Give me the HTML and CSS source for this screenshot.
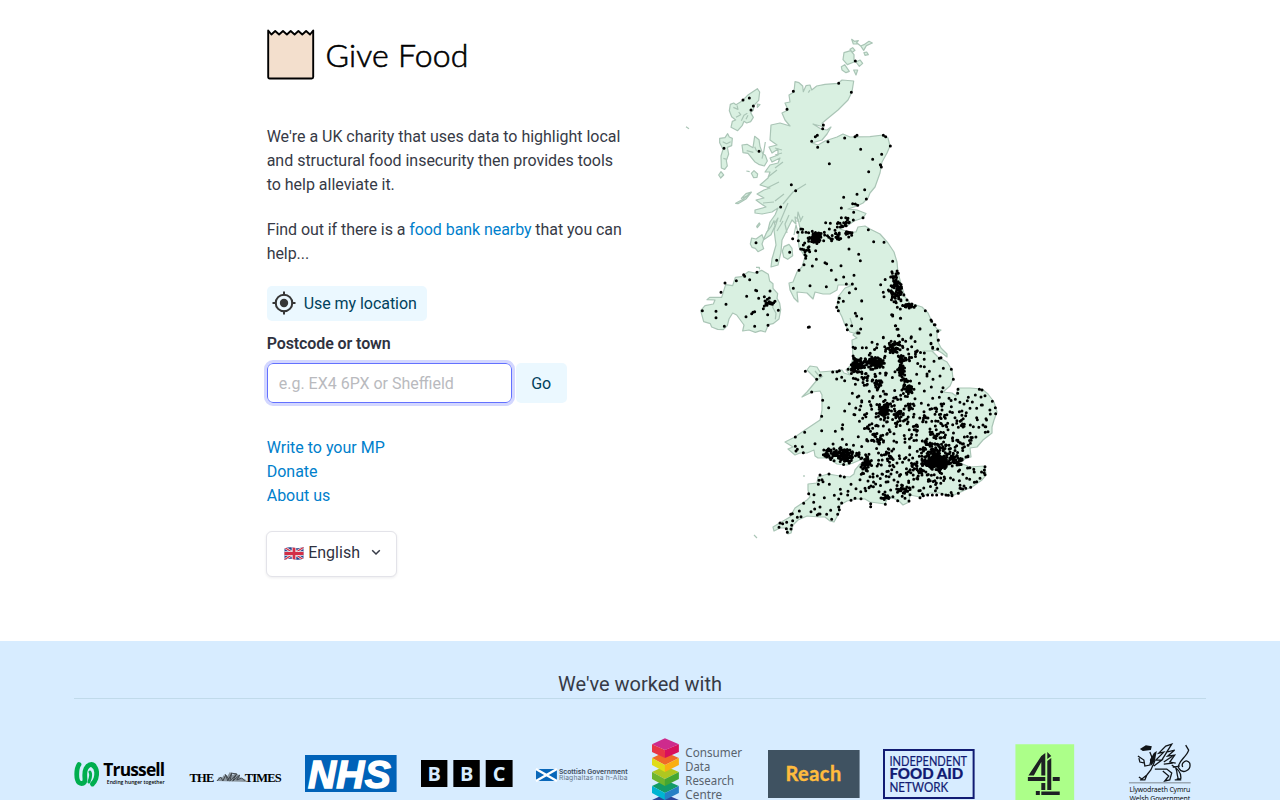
FILE: index.html
```html
<!DOCTYPE html>
<html lang="en">
<head>
<meta charset="utf-8">
<title>Give Food</title>
<link rel="stylesheet" href="styles.css">
</head>
<body>
<main class="hero">
  <section class="intro">
    <svg class="brand" viewBox="0 0 204 52" role="img" aria-label="Give Food">
      <path d="M1.200 48V1.500l3.200 4 3.800-3.500 3.900 3.500L16 2l3.900 3.500 3.800-3.500 3.900 3.500 3.800-3.500 3.900 3.500 3.800-3.500 3.900 3.500L46.200 1.500v46.500q0 1.500-1.500 1.500H2.700Q1.200 49.500 1.200 48Z" fill="#f3dfcd" stroke="#000" stroke-width="1.900" stroke-linejoin="round"/>
      <text class="brand-name" x="58.500" y="38" textLength="143">Give Food</text>
    </svg>
    <p class="lead">We're a UK charity that uses data to highlight local<br>and structural food insecurity then provides tools<br>to help alleviate it.</p>
    <p class="lead invite">Find out if there is a <a href="#">food bank nearby</a> that you can<br>help...</p>
    <button class="button locate">
      <svg class="target" viewBox="0 0 24 24"><g fill="none" stroke="#363636" stroke-width="2"><circle cx="12" cy="12" r="8.300"/><path d="M12 .5v4M12 19.500v4M.5 12h4M19.500 12h4"/></g><circle cx="12" cy="12" r="4.200" fill="#363636"/></svg>
      <span>Use my location</span>
    </button>
    <label class="label" for="place">Postcode or town</label>
    <div class="search">
      <input class="input" id="place" placeholder="e.g. EX4 6PX or Sheffield">
      <button class="button go">Go</button>
    </div>
    <ul class="links">
      <li><a href="#">Write to your MP</a></li>
      <li><a href="#">Donate</a></li>
      <li><a href="#">About us</a></li>
    </ul>
    <button class="language">
      <svg class="flag" viewBox="0 0 20 15"><defs><clipPath id="wave"><path d="M.5 2.500Q5 .5 10 1.700T19.500 1V12.500Q15 14.500 10 13.200T.5 14Z"/></clipPath></defs><g clip-path="url(#wave)"><path fill="#29428d" d="M0 0h20v15H0z"/><path stroke="#eee" stroke-width="2.600" d="m0 1 20 13M20 1 0 14"/><path stroke="#d32d45" stroke-width="1.200" d="m0 1 20 13M20 1 0 14"/><path stroke="#eee" stroke-width="4.600" d="M10 0v15M0 7.500h20"/><path stroke="#d32d45" stroke-width="2.800" d="M10 0v15M0 7.500h20"/></g></svg>
      <span>English</span>
      <svg class="chevron" viewBox="0 0 10 7"><path d="m1.200 1.200 3.800 3.800 3.800-3.800" fill="none" stroke="#363a46" stroke-width="1.500"/></svg>
    </button>
  </section>
  <svg class="map" viewBox="680 30 330 515" role="img" aria-label="Map of food banks in the UK">
    <g class="land">
      <path id="mainland" d="M795 81.700 799 82.700 802.700 86 803.300 91.700 806 85.700 810 85 811.700 90 816.700 86 825 84.300 838 83.300 842 80 853.700 81 852 91.700 848 100 838 110 827 119 822 123.300 824 127 813 124 821 129 827 130 831 127 827 134 822 140 812 143 818 145 825 141 837 137 843 134 850 137 870 136.700 883 135 888 138 890 146 887 153 882 162 880 173 875 187 870 193 868 198 863 203 857 206 848 209 857 210 866 213.500 863 218 854 221 847 226 840 229 849 232 856 232 858 227 865 226 870 229 880 234 888 243 894 252 897 262 898 273 902 287 905 297 910 303 922 307 928 313 932 322 937 329 941 330 937 333 937 340 941 348 947 354 947 357 942 353 937 350 932 351 923 351 932 351 938 357 947 362 952 370 953 379 950 386 943 392 952 393 956 396 958 388 970 388 982 389 988 394 994 402 997 412 994 420 992 427 992 433 983 440 977 447 970 448 971 457 966 458 960 463 970 467 985 466 986 475 982 480 972 487 965 490 952 496 940 493 930 493 920 497 910 495 909 502 903 505 898 500 892 498 887 499 885 504 878 503 870 502 865 499 857 499 847 501 840 505 839 513 834 522 830 521 825 517 820 517 807 516 798 520 793 525 791 533 788 534 787 528 780 528 774 531 773 527 778 524 790 517 795 508 807 500 810 497 808 490 808 484 817 483 818 477 828 474 840 476 850 477 854 474 855 470 860 464 867 460 860 460 853 463 847 465 837 464 828 458 818 458 815 456 814 450 807 453 800 453 795 455 788 449 793 447 785 442 795 437 805 430 820 420 822 410 822 395 820 391 812 392 802 397 807 392 817 380 807 370 810 366 817 367 820 372 832 371 842 370 844 373 850 375 846 370 851 365 853 358 852 340 857 338 853 335 858 330 857 334 850 332 845 325 842 317 837 307 838 297 845 288 853 285 838 285 837 290 830 294 823 294 815 292 813 299 807 293 797 292 798 302 794 298 790 290 789 283 793 282 797 272 802 267 805 257 799 247 798 237 800 228 798 219 795 217 796 224 792 220 787 230 782 240 781 252 778 265 771 267 772 259 776 245 774 230 778 218 768 233 764 239 768 230 770 222 775 215 778 208 772 212 762 214 755 213 755 210 766 207 760 203 756 200 764 198 757 194 764 190 770 188 760 185 768 178 770 172 765 172 770 165 778 163 780 158 772 162 770 158 778 155 778 149 772 153 769 147 777 145 770 140 771 125 780 123 790 126 785 120 782 113 788 110 785 103 790 102 789 95 794 92Z"/>
      <g transform="translate(670 30) scale(.33333)">
        <path d="m262 176 7 10-3 25-14 15-2 14-8 8 8 14-8 13-12 4-8-5-5 12-14 16-20-10 4-18 10-4-12-10-7-18 3-19 10-4 7 5 17-10 20-20ZM149 325l16-2 8-12 5 10 9 4-2 22-13 5 4 20-7 20 3 16-8 10-10-4-1-36 6-20-10-20ZM146 435l7-10 8 10-9 9ZM216 345l15-2 18 10 5-34 13 10 3 20 8 22 8 5 6 17-9 15-17-5-12-8-20-25-15-2ZM244 430l8-8 11 10-2 10-10 1ZM229 423l10 2M48 290l9 6"/>
        <path class="inlets" d="m190 232 14 6-3-12M198 262l14-8-6-8M214 272l8-16 10-6M228 268l6-12M158 335l12 6 12-6M160 385l10 3M230 362l20 5M254 350l6 14M420 180l-5 8"/>
        <path d="m262 222 8 2-8 8ZM286 336l-5 30-5 20M522 68l20-6 10 12 0 22-20 8-13-15ZM540 58l8-5 7 8-8 6ZM545 28l8 6 12-2-5 6 12 10 10-4 15-10 10 5-18 8-8 14-8-12-8-7-15 0ZM582 68l8-2 5 8-10 2ZM558 96l12-6 8 10-10 9ZM514 110l10-6 14 20-10 4-12-8ZM551 120l12 0-5 15ZM214 505l14-14 16-5-12 12Z"/>
      </g>
      <g transform="translate(670 190) scale(.33333)">
        <path d="m92 362 13-15 25-5 5-12-24-1 8-7 36 0 12-38 21 3 8-25 19-2 20-15 20 4 20-8 20 12 4 20 10 8 0 14 14 16-2 14 8 14 3 20-5 28-18 14-14 3-9 22-14-4-16 5-19-7-19 3 4-18-22-30-12-6-11 18-5 20-12 12-17-1-18-7-4-10-20-6Z"/>
        <path class="inlets" d="m312 330-4 22 10 18-2 18"/>
        <path d="m241 162 4-18 13 3 18-13 5 14-5 14 5 14-17 9-8-10-10-3ZM342 170l15-7 9 12 2 22-15 11-12-7-4-18ZM197 40l22-12 24-20-14 18-25 15ZM260 109l8-10 2 4-8 10ZM280 150l10-23 13-17 9-18 3 15-12 27ZM258 232l10 0 1 6"/>
      </g>
      <path d="m754 535 3 3M804 475v2"/>
      <path class="inlets" d="m783 204 10-12 13-8M780 222l8-19M775 148l7 2M775 155l7-2M775 168l8-6M768 177l9-7M767 188l12-6M763 203l11-1M794 235l2-10 3 12M775 201l9-7M801 221l-3-9-1 10M800 222l3-6M787 233l-2-9 4-9M777 231l6-10M910 494l-5-3M817 380l6-4M852 324l-2-6M848 451l5 10M820 377l-5-6"/>
    </g>
    <path id="dots" class="dots"/>
  </svg>
</main>
<footer class="partners">
  <h2 class="partners-title">We've worked with</h2>
  <div class="logos">
    <svg viewBox="0 0 92 26" height="26"><g fill="none" stroke="#00ae4f" stroke-linecap="round"><path stroke-width="4.800" d="M5 3.500C2 8 2 19 5 21.500c3 2 6 1 6-3 0-3-1-7 1-11s6-5 8-3"/><path stroke-width="4.800" d="M19 4.500c5 3 4 10 3 13s-2 4-3.500 5.500"/><path stroke-width="3" d="M16 11c2 3 0 7-1 10"/></g><text class="trussell" x="29.500" y="15.500" textLength="62">Trussell</text><text class="tiny" x="33" y="23.500" textLength="58" lengthAdjust="spacingAndGlyphs">Ending hunger together</text></svg>
    <svg viewBox="0 0 92 14" height="14" class="times-logo"><text class="times" x="-.5" y="13" textLength="25">THE</text><path d="m27 12 2-4 3 1 2-3 3 2 3-5 3 3 3-2 3 2 2 3 4 1 3 3Z" fill="#8b969f"/><path d="m27 12 4-4 2 4 3-6 2 6 4-8-2 8 6-6-3 6 7-6-3 5 5-2 3 3M35 5l4 5M41 4l6 1-3 4" fill="none" stroke="#40474d"/><text class="times" x="55" y="13" textLength="37">TIMES</text></svg>
    <svg viewBox="0 0 92 37" height="37"><path fill="#0062b8" d="M0 0h92v37H0z"/><text class="nhs" x="3" y="33" textLength="83">NHS</text></svg>
    <svg viewBox="0 0 92 27" height="27"><path d="M0 0h26.500v27H0zM32.500 0H59v27H32.500zM65 0h27v27H65z"/><g class="bbc"><text x="13.300" y="21">B</text><text x="46" y="21">B</text><text x="78.500" y="21">C</text></g></svg>
    <svg viewBox="0 0 92 16" height="16" class="scottish-logo"><path fill="#0967b9" d="M0 2h21v12H0z"/><path stroke="#fff" stroke-width="2.500" d="m0 2 21 12M21 2 0 14"/><text class="scottish" x="23" y="7" textLength="69">Scottish Government</text><text class="scottish gaelic" x="23" y="13.500" textLength="69">Riaghaltas na h-Alba</text></svg>
    <svg viewBox="0 0 92 72" height="72"><path fill="#2d4699" d="m0 62 13-6 14 6v4l-14 6-13-6Z"/><path fill="#712883" d="m13 68 14-6v4l-14 6Z"/><path fill="#139b68" d="m0 48 13-6 14 6-14 7Z"/><path fill="#00b4d2" d="m0 48 13 7v7L0 55Z"/><path fill="#2680c6" d="m13 55 14-7v7l-14 7Z"/><path fill="#afc720" d="m0 34 13-6 14 6-14 7Z"/><path fill="#6db52e" d="m0 34 13 7v7L0 41Z"/><path fill="#44a732" d="m13 41 14-7v7l-14 7Z"/><path fill="#f06b27" d="m0 20 13-6 14 6-14 7Z"/><path fill="#e0dc16" d="m0 20 13 7v7L0 27Z"/><path fill="#faae12" d="m13 27 14-7v7l-14 7Z"/><path fill="#ce2b8d" d="M0 6 13 0l14 6-14 6Z"/><path fill="#e83545" d="m0 6 13 6v8L0 14Z"/><path fill="#d8105c" d="m13 12 14-6v8l-14 6Z"/><g class="cdrc"><text x="33.500" y="19" textLength="57" lengthAdjust="spacingAndGlyphs">Consumer</text><text x="33.500" y="33.200" textLength="25" lengthAdjust="spacingAndGlyphs">Data</text><text x="33.500" y="47.400" textLength="49" lengthAdjust="spacingAndGlyphs">Research</text><text x="33.500" y="61.600" textLength="37" lengthAdjust="spacingAndGlyphs">Centre</text></g></svg>
    <svg viewBox="0 0 92 48" height="48"><path fill="#3f5261" d="M0 0h92v48H0z"/><text class="reach" x="17.500" y="31" textLength="56">Reach</text></svg>
    <svg viewBox="0 0 92 50" height="50"><path fill="none" stroke="#111b73" stroke-width="2" d="M1 1h90v48H1z"/><g class="ifan"><text x="6.500" y="16.500" textLength="78" lengthAdjust="spacingAndGlyphs">INDEPENDENT</text><text class="ifan-bold" x="6.500" y="30.200" textLength="74" lengthAdjust="spacingAndGlyphs">FOOD AID</text><text x="6.500" y="43.500" textLength="59" lengthAdjust="spacingAndGlyphs">NETWORK</text></g></svg>
    <svg viewBox="0 0 92 59" height="59"><path fill="#acff89" d="M16.500 0h59v59h-59z"/><path fill="#1d2023" d="m42.500 12 4-3v22.500h-4V18L35 31.500h-5.500ZM48.500 8l4 4-4 3ZM48.500 17l4-3v32h-4ZM29 33h17.500v4H29zM54 33h7v4h-7zM37 47h4v4h-4zM42.500 39h4v7h-4zM42.500 47.500H61V51H42.500z"/></svg>
    <svg viewBox="0 0 92 63" height="63" class="welsh-logo"><g transform="translate(9)"><path d="m15 13 6 4 1 6 5-1 2-8-2-5M16 15l1 4 5 1M32 18l-4 9-4 5-5 4-3-2M24 32l-2 5-5 0M31 23l8-6-6 0 8-8-5 1 7-7 6-2-5 8 8-2-7 6 7-1-5 7 6 1M39 17l5-8M41 19l9-6M41 21l9-1M32 26l12 0 5 4-2 7-5 1 4-5-6-5M53 25c3 7 0 9 4 12h-5M49 22c7 4 10 8 9 14h-4M63 2l3 5c-2 7-12 12-10 18 4 7 13 2 11-5-3-5-9 0-7 4M50 24l7-1" fill="none" stroke="#101418" stroke-width="1.300"/><path fill="#101418" d="m17 6 6-4 6 1-1 4-8 1ZM27 17l4-7 3-2-2 10-4 5Z"/></g><path fill="#9ca9b5" d="M15 39h62v1.500H15z"/><g class="welsh"><text x="15.500" y="49.500" textLength="61">Llywodraeth Cymru</text><text x="15.500" y="58.500" textLength="61">Welsh Government</text></g></svg>
  </div>
</footer>
<script src="map.js"></script>
</body>
</html>
```
FILE: styles.css
```css
* { box-sizing: border-box; }
body { margin: 0; height: 800px; overflow: hidden; background: #fff; color: #363a46; font: 16px/24px Roboto, "Liberation Sans", sans-serif; }
button, input { font: inherit; }
a { color: #0080cc; text-decoration: none; }
.hero { display: flex; gap: 53px; height: 640.500px; padding: 28px 0 0 266.700px; }
.intro { display: flex; flex-direction: column; align-items: flex-start; width: 360px; }
.map { width: 330px; height: 515px; margin-top: 2px; flex: none; }
.brand { width: 204px; height: 52px; margin: 1px 0 43.500px; overflow: visible; }
.brand-name { font: 300 32px Lato, sans-serif; fill: #000; stroke: #000; stroke-width: .6px; }
.lead { margin: 0 0 21px; white-space: nowrap; letter-spacing: -.02px; }
.invite { letter-spacing: -.07px; }
.button { display: flex; align-items: center; justify-content: center; border: 0; border-radius: 5px; background: #ebf8ff; color: #00415c; padding: 0; }
.locate { width: 160px; height: 35px; margin-top: -1px; gap: 8px; justify-content: flex-start; padding-left: 5px; }
.locate span { padding-top: 1px; letter-spacing: -.05px; }
.target { width: 24px; height: 24px; }
.label { margin: 11.500px 0 6.500px; font-weight: 600; color: #2f323f; letter-spacing: -.1px; }
.search { display: flex; gap: 4px; }
.input { width: 245px; height: 40px; padding: 1px 11px 0; border: 1px solid #6371ff; border-radius: 6px; outline: 3px solid #d3d7ff; background: #fff; }
.input::placeholder { color: #b9babe; opacity: 1; }
.go { width: 51px; height: 40px; padding-top: 2px; }
.links { list-style: none; margin: 33px 0 23px; padding: 0; }
.language { display: flex; align-items: center; width: 130.500px; height: 46px; margin-left: -.5px; padding: 0 15px 2px 17px; border: 1.500px solid #e3e3e9; border-radius: 6px; background: #fff; color: #2f323f; box-shadow: 0 1px 3px #0a0a2214; }
.flag { width: 20px; height: 15px; margin: 1px 4px 0 0; }
.chevron { width: 10px; height: 7px; margin-left: auto; }
.land { fill: #d9f0e1; stroke: #aac5b6; stroke-width: 1.200; stroke-linejoin: round; }
.land g { stroke-width: 3.600; }
.land .inlets { fill: none; }
.dots { fill: none; stroke: #000; stroke-width: 3; stroke-linecap: round; }
.partners { height: 159.500px; padding: 29.500px 74px 0; background: #d7ecff; overflow: hidden; }
.partners-title { margin: 0; height: 29px; border-bottom: 1.500px solid #c0daea; text-align: center; font-size: 20px; font-weight: 400; line-height: 28px; }
.logos { display: grid; grid-template-columns: repeat(10, 1fr); gap: 24px; align-items: center; height: 72px; margin-top: 38.700px; }
.logos svg { width: 100%; overflow: visible; }
.trussell { font: 700 17.500px "Open Sans", sans-serif; }
.tiny { font: 600 5.500px "Open Sans", sans-serif; }
.times-logo { margin-top: 4px; }
.times { font: 700 12.500px "Liberation Serif", serif; }
.nhs { font: italic 700 39px "Liberation Sans", sans-serif; fill: #fff; stroke: #fff; stroke-width: 1.500px; }
.bbc { font: 700 20px "Open Sans", sans-serif; fill: #d7ecff; text-anchor: middle; }
.scottish-logo { margin-top: 3px; }
.scottish { font: 600 6.800px Inter, sans-serif; fill: #3e4b5c; }
.gaelic { font-weight: 400; fill: #68778a; }
.cdrc { font: 13px "Noto Sans", sans-serif; fill: #59636d; }
.reach { font: 700 20px Lato, sans-serif; fill: #ffbc3d; stroke: #ffbc3d; stroke-width: .4px; }
.ifan { font: 12.500px Lato, sans-serif; fill: #111b73; stroke: #111b73; stroke-width: .2px; }
.ifan-bold { font-weight: 900; font-size: 14.500px; }
.welsh-logo { margin-top: 2px; }
.welsh { font: 7px "Open Sans", sans-serif; }
```
FILE: map.js
```js
// Each sheet: origin x, origin y, then points at three units per map pixel.
const sheets = [
  [670, 30, "506,160 544,187 370,184 351,238 219,210 238,204 250,228 243,240 162,355 267,364 556,93 460,285 458,296 436,320 442,316 425,334 443,352 474,335 524,324 555,320 561,316 640,316 647,320 661,348 635,373 608,388 572,358 632,406 634,411 631,404 596,425 478,401 364,464 377,482 584,479 561,493 521,502 589,507"],
  [670, 190, "521,22 561,13 332,51 514,54 548,41 556,42 563,46 551,67 579,83 537,177 566,193 571,212 513,227 484,241 465,218 470,221 439,208 427,228 402,224 387,241 420,287 370,295 469,290 498,269 521,261 552,256 529,282 547,282 557,296 538,308 575,332 508,325 520,334 505,337 500,352 505,362 556,370 560,378 575,386 529,404 545,407 532,419 572,417 563,429 567,429 595,119 611,155 642,157 668,214 632,284 657,303 642,320 692,385 677,407 684,418 665,374 668,378 640,442 682,352 685,437 698,448 667,250 684,250 320,211 359,187 258,158 415,412 418,411 97,362 138,364 138,383 163,409 168,343 153,307 165,279 199,272 221,254 224,259 239,269 261,247 300,303 257,301 260,302 230,319 266,325 283,320 228,380 245,371 249,367 254,365 280,356 293,374 325,361 294,406 254,409 285,333 292,328 298,324 288,341 295,340 301,341 307,343 311,338 315,334 291,346 283,348 298,335 303,338 290,338 383,127 393,117 398,118 397,127 408,127 416,128 430,131 416,147 368,146 385,152 400,165 404,159 417,170 405,185 419,185 437,182 408,198 407,205 467,98 481,100 514,83 534,85 538,97 550,90 521,98 515,107 502,111 478,117 495,121 503,135 487,147 463,127 449,130 392,177 397,178 402,179 410,181 417,180 405,194"],
  [830, 225, "270,311 305,289 313,299 323,318 325,346 302,330 303,356 286,257 211,280 196,302 203,313 188,270 244,337 207,332 218,344 227,349 160,338 95,228 187,145 198,146 205,145 198,152 256,242 231,225"],
  [770, 320, "106,154 140,178 151,166 125,216 158,241 155,289 176,263 188,156 201,155 208,152 215,172 224,182 238,251 224,273 275,242 275,246 247,220 269,269 305,268 302,254 308,233 298,214 331,229 340,214 330,160 349,160 375,155 218,314 216,325 278,295 318,291 298,315 332,298 352,305 450,27 377,17 381,28 386,46 424,50 423,54 398,58 407,64 340,52 306,67 289,83 277,83 322,73 320,83 482,44 503,34 495,14 483,0 483,70 488,85 488,82 503,87 505,60 442,92 463,99 425,80 452,139 463,140 492,124 513,113 508,115 520,145 544,148 550,178 510,168 489,178 471,162 471,168 478,154 440,163 448,190 463,213 484,201 515,215 519,203 564,208 563,220 556,238 537,235 521,251 508,232 488,235 498,264 494,265 500,267 454,250 475,255 435,236 462,275 480,268 516,270 544,260 540,275 568,275 587,287 600,265 607,246 592,242 582,252 595,232 616,225 628,208 636,210 645,227 633,231 637,255 634,255 620,265 667,244 676,263 677,281 661,282 648,296 620,293 622,299 601,315 610,320 583,313 560,310 533,310 530,320 512,310 512,283 495,283 497,303 496,318 526,295 555,293 565,322 432,283 460,300 458,305 439,315 480,327 405,300 412,311 376,310 383,305 340,318"],
  [740, 425, "166,36 194,22 245,17 286,19 307,12 307,43 225,56 166,64 187,65 168,78 172,73 190,83 240,150 237,166 246,164 267,147 301,153 313,156 235,178 249,170 268,178 206,206 222,209 253,218 221,232 191,235 213,260 224,252 240,246 283,211 301,193 303,206 296,222 324,199 323,210 333,178 348,191 360,164 375,190 387,188 407,177 384,168 333,226 345,220 363,221 392,236 392,245 436,238 435,201 417,200 473,227 452,195 470,192 444,170 412,153 426,147 445,139 447,155 479,150 462,165 272,256 260,268 275,283 296,246 298,254 293,268 305,234 240,267 232,270 236,267 183,275 172,277 178,258 157,266 152,268 158,287 140,292 128,296 120,294 117,307 155,301 139,311 142,322 153,312 735,125 733,135 735,149 720,160 710,170 692,187 703,172 689,163 672,183 660,190 668,192 655,205 636,212 636,209 625,211 618,210 606,208 590,210 577,210 563,210 550,212 540,218 547,207 510,209 507,228 495,220 510,190"]
];
// Town clusters: origin, centre, spread, number of food banks.
const clusters = [
  [670,190,437,143,11,9,60],[670,190,536,127,5,6,20],[670,190,490,138,16,9,18],[670,190,525,103,12,9,12],
  [830,225,200,190,13,22,85],[830,225,232,242,10,5,26],
  [770,320,260,135,11,10,65],[770,320,320,127,12,9,78],[770,320,290,128,14,11,26],[770,320,277,165,24,14,30],
  [770,320,250,98,4,14,12],[770,320,373,82,10,10,50],[770,320,393,118,7,7,27],[770,320,395,148,6,12,28],[770,320,403,180,7,9,17],
  [770,320,413,206,8,5,23],[770,320,425,110,14,16,12],[770,320,324,193,7,10,20],[770,320,343,275,10,9,75],[770,320,340,250,17,13,18],
  [770,320,420,260,8,9,16],[770,320,388,283,9,12,24],[770,320,380,235,16,12,12],
  [740,425,300,90,22,12,85],[740,425,262,83,9,10,18],[740,425,325,95,10,16,26],[740,425,381,113,7,7,34],[740,425,372,125,18,14,20],
  [740,425,595,110,15,9,210],[740,425,590,90,24,25,120],[740,425,640,105,27,14,50],[740,425,440,218,7,4,20],[740,425,490,190,9,9,22],
  [740,425,445,97,7,7,12],[740,425,415,45,15,12,24],[740,425,530,125,16,14,24]
];
const land = document.getElementById("mainland");
let seed = 71;
const random = () => (seed = (seed * 16807) % 2147483647) / 2147483647;
const marks = [];
const add = (x, y) => marks.push("M" + x.toFixed(2) + " " + y.toFixed(2) + "h.01");
const onLand = (x, y) => land.isPointInFill(new DOMPoint(x, y));

for (const [ox, oy, list] of sheets) {
  for (const pair of list.split(" ")) {
    const [x, y] = pair.split(",").map(Number);
    add(ox + x / 3, oy + y / 3);
  }
}
for (const [ox, oy, cx, cy, sx, sy, count] of clusters) {
  for (let i = 0; i < count; i++) {
    const r = Math.sqrt(-2 * Math.log(random()));
    const a = random() * Math.PI * 2;
    const x = ox + (cx + r * Math.cos(a) * sx) / 3;
    const y = oy + (cy + r * Math.sin(a) * sy) / 3;
    if (onLand(x, y)) add(x, y);
  }
}
// Scattered rural sites: left, top, width, height, count.
for (const [l, t, w, h, count] of [[858,425,130,50,210],[858,474,110,19,60],[853,412,115,14,46],[852,348,60,60,40],[925,395,65,30,12]]) {
  for (let i = 0; i < count; i++) {
    const x = l + random() * w, y = t + random() * h;
    if (onLand(x, y)) add(x, y);
  }
}
document.getElementById("dots").setAttribute("d", marks.join(""));
```
